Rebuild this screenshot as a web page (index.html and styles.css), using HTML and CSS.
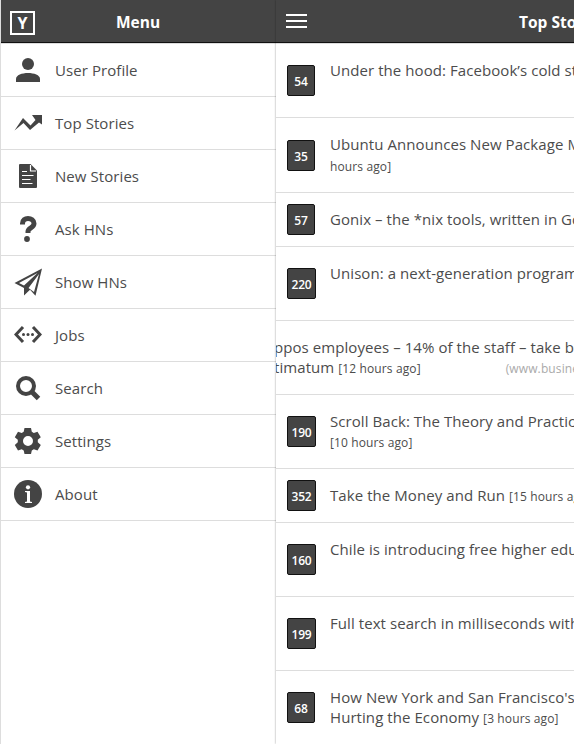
FILE: index.html
```html
<!DOCTYPE html>
<html lang="en">
<head>
  <meta charset="UTF-8" />
  <meta name="viewport" content="width=device-width, initial-scale=1" />
  <title>Top Stories</title>
  <link rel="stylesheet" href="styles.css">
</head>
<body>
  <!-- Side menu -->
  <nav class="menu">
    <header class="bar">
      <div class="logo">Y</div>
      <h1 class="menu-title">Menu</h1>
    </header>
    <a class="menu-item">
      <svg class="icon" viewBox="0 0 28 28"><circle cx="14" cy="8" r="6"/><path d="M2 26v-3c0-4 6-6 12-6s12 2 12 6v3z"/></svg>
      <span>User Profile</span>
    </a>
    <a class="menu-item">
      <svg class="icon" viewBox="0 0 28 28"><path d="M.5 21.500L9 9l7.500 7.500 5-5.500L18 6H28v9.500l-3-2L16 21 9.500 14z"/></svg>
      <span>Top Stories</span>
    </a>
    <a class="menu-item">
      <svg class="icon" viewBox="0 0 28 28"><path d="M6 2h10.500L23 8.500V25a1 1 0 0 1-1 1H6a1 1 0 0 1-1-1V3a1 1 0 0 1 1-1z"/><path class="cut" d="M16.500 3v6H22M8 9.500h5M8 13.500h11.500M8 17.500h8.500M8 21.500h10.500"/></svg>
      <span>New Stories</span>
    </a>
    <a class="menu-item">
      <svg class="icon" viewBox="0 0 28 28"><path class="line bold" d="M8.500 9.500V8.500c0-3.500 2.500-5 5.500-5s6 1.800 6 5c0 4.500-6 4-6 8v1.500"/><circle cx="13" cy="24" r="2.900"/></svg>
      <span>Ask HNs</span>
    </a>
    <a class="menu-item">
      <svg class="icon" viewBox="0 0 28 28"><path fill-rule="evenodd" d="M28 .5L21.500 27.800l-5.500-6L10 27.500V20L.5 15zM23.500 5L5 15l5 2.500zM25 6L14.500 20l5.500 4z"/></svg>
      <span>Show HNs</span>
    </a>
    <a class="menu-item">
      <svg class="icon" viewBox="0 0 28 28"><path class="line" d="M9 6L2 13.500 9 21M19 6l7 7.500-7 7.500"/><circle cx="9.500" cy="13.500" r="1.500"/><circle cx="14" cy="13.500" r="1.500"/><circle cx="18.500" cy="13.500" r="1.500"/></svg>
      <span>Jobs</span>
    </a>
    <a class="menu-item">
      <svg class="icon" viewBox="0 0 28 28"><circle class="line thick" cx="12" cy="12" r="8"/><path class="line bold" d="M18 18l6.500 6.500"/></svg>
      <span>Search</span>
    </a>
    <a class="menu-item">
      <svg class="icon" viewBox="0 0 28 28"><path fill-rule="evenodd" d="M10.500 1h6.500l.8 3.800 2 1.200 3.700-1.200 3.300 5.500-3 2.500v2.500l3 2.700-3.300 5.500-3.700-1.200-2 1.200-.8 3.500h-6.500l-.8-3.500-2-1.200L4 23.500.8 18l3-2.700v-2.500l-3-2.500L4 4.800 7.700 6l2-1.200zM14 9a5 5 0 1 0 0 10 5 5 0 0 0 0-10z"/></svg>
      <span>Settings</span>
    </a>
    <a class="menu-item">
      <svg class="icon" viewBox="0 0 28 28"><circle cx="14" cy="14" r="14"/><circle class="hole" cx="14" cy="7.300" r="2.100"/><path class="hole" d="M11 11h5v10.500l2 .5v1h-7v-1l2-.5v-9l-2-.5z"/></svg>
      <span>About</span>
    </a>
  </nav>

  <!-- Story list -->
  <main class="content">
    <header class="bar">
      <div class="burger"><i></i><i></i><i></i></div>
      <h2 class="page-title">Top Stories</h2>
    </header>
    <article class="story">
      <span class="score">54</span>
      <p class="text">Under the hood: Facebook’s cold storage</p>
    </article>
    <article class="story tall">
      <span class="score">35</span>
      <p class="text">Ubuntu Announces New Package Manager<br><small>hours ago]</small></p>
    </article>
    <article class="story single">
      <span class="score">57</span>
      <p class="text">Gonix – the *nix tools, written in Go</p>
    </article>
    <article class="story">
      <span class="score wide">220</span>
      <p class="text">Unison: a next-generation programming</p>
    </article>
    <article class="story swiped">
      <p class="text two-line">ppos employees – 14% of the staff – take buyouts<br>timatum <small>[12 hours ago]</small><small class="domain">(www.businessinsider.com)</small></p>
    </article>
    <article class="story">
      <span class="score wide">190</span>
      <p class="text two-line">Scroll Back: The Theory and Practice<br><small>[10 hours ago]</small></p>
    </article>
    <article class="story single">
      <span class="score wide">352</span>
      <p class="text two-line">Take the Money and Run <small>[15 hours ago]</small></p>
    </article>
    <article class="story">
      <span class="score wide">160</span>
      <p class="text">Chile is introducing free higher education</p>
    </article>
    <article class="story">
      <span class="score wide">199</span>
      <p class="text">Full text search in milliseconds with</p>
    </article>
    <article class="story">
      <span class="score">68</span>
      <p class="text two-line">How New York and San Francisco's<br>Hurting the Economy <small>[3 hours ago]</small></p>
    </article>
  </main>
</body>
</html>
```
FILE: styles.css
```css
* {
  box-sizing: border-box;
}

body {
  margin: 0;
  display: flex;
  height: 100vh;
  overflow: hidden;
  background: #fff;
  color: #4c4c4c;
  font-family: "Open Sans", "Noto Sans", sans-serif;
  font-size: 15px;
  letter-spacing: 0.07px;
}

.bar {
  display: flex;
  align-items: center;
  height: 44px;
  background: #444;
  border-bottom: 1px solid #ddd;
  box-shadow: inset 0 -1px #111;
  color: #fff;
}

.menu {
  flex: none;
  width: 276px;
  border-left: 1px solid #ddd;
}

.logo {
  width: 25px;
  height: 24px;
  margin-left: 9px;
  margin-top: 2px;
  border: 2px solid #fff;
  font-size: 16px;
  font-weight: bold;
  line-height: 20px;
  text-align: center;
}

.menu-title,
.page-title {
  margin: 0;
  font-size: 15.5px;
  font-weight: bold;
  letter-spacing: 0;
  white-space: nowrap;
}

.menu-title {
  margin-left: 81px;
}

.menu-item {
  display: flex;
  align-items: center;
  height: 53px;
  padding-left: 13px;
  border-bottom: 1px solid #ddd;
}

.menu-item span {
  margin-left: 13px;
}

.icon {
  width: 28px;
  height: 28px;
  fill: #444;
}

.icon .line {
  fill: none;
  stroke: #444;
  stroke-width: 3;
}

.icon .thick {
  stroke-width: 4;
}

.icon .bold {
  stroke-width: 5;
}

.icon .cut {
  fill: none;
  stroke: #fff;
  stroke-width: 1.2;
}

.icon .hole {
  fill: #fff;
}

.content {
  flex: 1;
  min-width: 0;
  overflow: hidden;
  box-shadow: 0 0 2px rgba(0, 0, 0, 0.4);
}

.burger {
  flex: none;
  display: grid;
  gap: 4px;
  width: 21px;
  margin-left: 10px;
  margin-top: -1px;
}

.burger i {
  height: 2px;
  background: #fff;
}

.page-title {
  margin-left: 212px;
}

.story {
  display: flex;
  align-items: center;
  height: 74px;
  padding-left: 11px;
  border-bottom: 1px solid #ddd;
}

.story.single {
  height: 54px;
}

.story.tall {
  height: 75px;
}

.score {
  flex: none;
  width: 28px;
  height: 31px;
  margin-right: 15px;
  border: 1px solid #111;
  border-radius: 2px;
  background: #444;
  color: #fff;
  font-size: 12px;
  font-weight: 600;
  letter-spacing: -0.2px;
  line-height: 31px;
  text-align: center;
}

.score.wide {
  width: 29px;
  margin-right: 14px;
}

.text {
  min-height: 40px;
  margin: 0 0 1px;
  line-height: 20px;
  white-space: nowrap;
}

.text.two-line {
  margin-bottom: -1px;
}

.single .text {
  min-height: 0;
}

.tall .text {
  margin-bottom: -2px;
}

small {
  font-size: 12px;
  letter-spacing: 0.12px;
}

.tall small {
  line-height: 25px;
}

.swiped {
  padding-left: 0;
}

.swiped .text {
  margin-left: -2px;
}

.domain {
  margin-left: 85px;
  color: #aaa;
}
```
